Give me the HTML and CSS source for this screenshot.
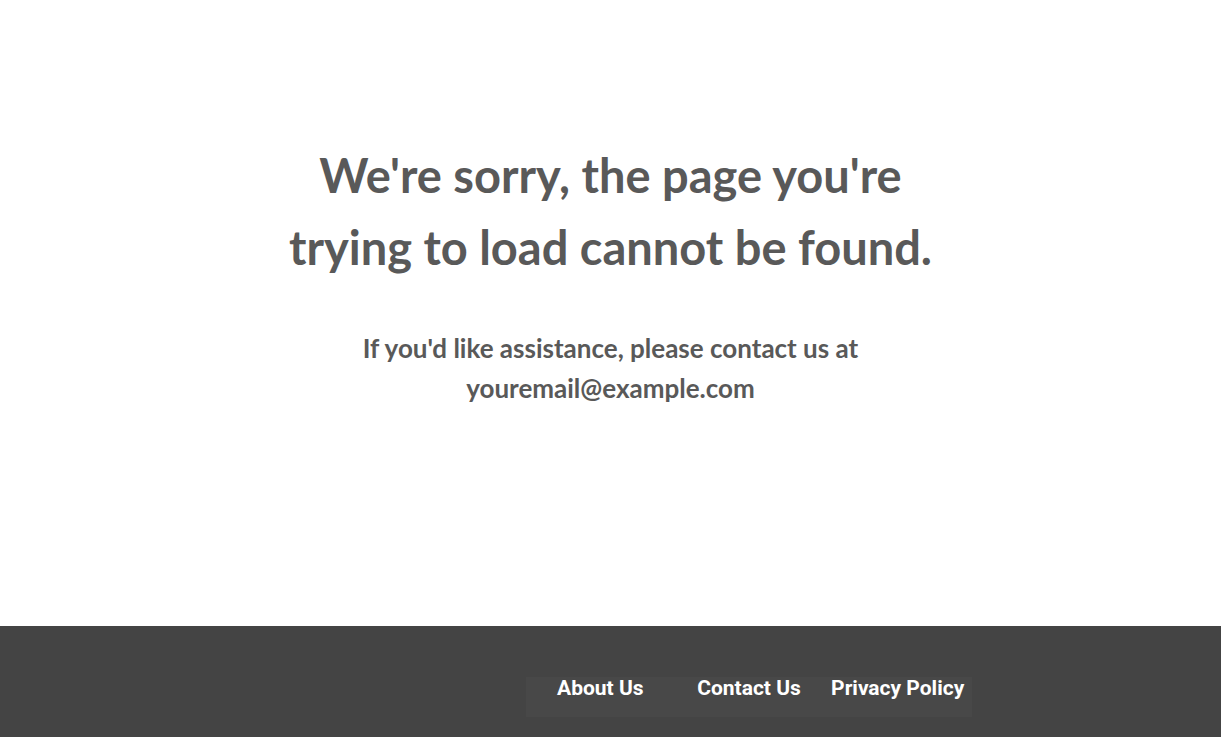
FILE: index.html
```html
<!DOCTYPE html>
<html lang="en">

<head>
    <meta charset="UTF-8">
    <meta name="viewport" content="width=device-width, initial-scale=1.0">
    <title>Page Not Found</title>
    <link rel="stylesheet" href="styles.css">
</head>

<body>

    <!-- Error message -->
    <main class="content">
        <div class="message">
            <h1>We're sorry, the page you're trying to load cannot be found.</h1>
            <p>If you'd like assistance, please contact us at youremail@example.com</p>
        </div>
    </main>

    <!-- Footer -->
    <footer class="footer">
        <ul class="footer-nav">
            <li><a href="#">About Us</a></li>
            <li><a href="#">Contact Us</a></li>
            <li><a href="#">Privacy Policy</a></li>
        </ul>
    </footer>

</body>

</html>
```

FILE: styles.css
```css
/* Global styles */
* {
    margin: 0;
    padding: 0;
    box-sizing: border-box;
}

body {
    font-family: 'Lato', 'Liberation Sans', sans-serif;
    background-color: #fff;
    display: flex;
    flex-direction: column;
    min-height: 100vh;
}

/* Content */
.content {
    height: 626px;
    padding-top: 139px;
    display: flex;
    justify-content: center;
}

.message {
    width: 660px;
    text-align: center;
    color: #595959;
}

h1 {
    font-size: 47px;
    font-weight: 700;
    line-height: 72px;
}

.message p {
    margin-top: 45px;
    font-size: 26px;
    font-weight: 700;
    line-height: 40px;
}

/* Footer */
.footer {
    flex: 1;
    background-color: #444;
    padding-top: 51px;
    display: flex;
    justify-content: center;
}

.footer-nav {
    list-style: none;
    display: grid;
    grid-template-columns: repeat(3, 1fr);
    width: 446px;
    height: 40px;
    margin-left: 277px;
    background-color: #484848;
}

.footer-nav li {
    text-align: center;
    line-height: 22px;
}

.footer-nav a {
    font-family: 'Roboto', 'Liberation Sans', sans-serif;
    font-size: 21px;
    font-weight: 700;
    color: #fff;
    text-decoration: none;
}
```
